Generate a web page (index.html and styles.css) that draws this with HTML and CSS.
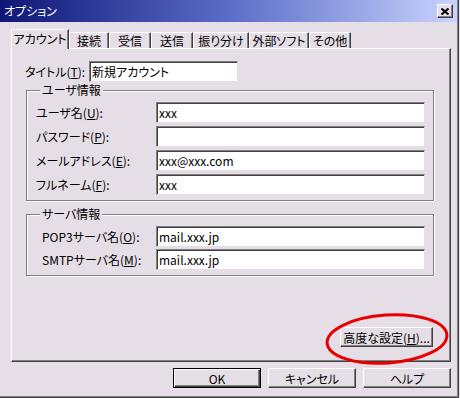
FILE: index.html
```html
<!DOCTYPE html>
<html lang="ja">
<head>
  <meta charset="UTF-8">
  <title>オプション</title>
  <link rel="stylesheet" href="styles.css">
</head>
<body>

  <div class="ventana">
    <div class="barra-titulo">
      <span class="titulo">オプション</span>
      <span class="cerrar">
        <svg width="8" height="7" viewBox="0 0 8 7"><path d="M0.5 0.5L7.5 6.5M7.5 0.5L0.5 6.5" stroke="#000" stroke-width="2"/></svg>
      </span>
    </div>

    <div class="pestanas">
      <div class="pestana activa">アカウント</div>
      <div class="pestana">接続</div>
      <div class="pestana">受信</div>
      <div class="pestana">送信</div>
      <div class="pestana">振り分け</div>
      <div class="pestana">外部ソフト</div>
      <div class="pestana">その他</div>
    </div>

    <div class="panel">
      <div class="fila-titulo">
        <label>タイトル(<u>T</u>):</label>
        <div class="campo campo-titulo">新規アカウント</div>
      </div>

      <fieldset class="grupo usuario">
        <legend>ユーザ情報</legend>
        <div class="fila"><label>ユーザ名(<u>U</u>):</label><div class="campo">xxx</div></div>
        <div class="fila"><label>パスワード(<u>P</u>):</label><div class="campo"></div></div>
        <div class="fila"><label>メールアドレス(<u>E</u>):</label><div class="campo">xxx@xxx.com</div></div>
        <div class="fila"><label>フルネーム(<u>F</u>):</label><div class="campo">xxx</div></div>
      </fieldset>

      <fieldset class="grupo servidor">
        <legend>サーバ情報</legend>
        <div class="fila"><label>POP3サーバ名(<u>O</u>):</label><div class="campo">mail.xxx.jp</div></div>
        <div class="fila"><label>SMTPサーバ名(<u>M</u>):</label><div class="campo">mail.xxx.jp</div></div>
      </fieldset>

      <div class="fila-avanzado">
        <button class="boton avanzado">高度な設定(<u>H</u>)...</button>
      </div>
    </div>

    <div class="botones">
      <button class="boton defecto">OK</button>
      <button class="boton">キャンセル</button>
      <button class="boton">ヘルプ</button>
    </div>

    <svg class="marca" width="140" height="70" viewBox="0 0 140 70">
      <ellipse cx="70" cy="35" rx="60" ry="24" transform="rotate(-4 70 35)" fill="none" stroke="#e80000" stroke-width="3"/>
    </svg>
  </div>

</body>
</html>
```

FILE: styles.css
```css
body {
  margin: 0;
  font-family: "Noto Sans CJK JP", sans-serif;
  font-size: 12px;
  font-feature-settings: "palt";
  color: #000;
  background: #e6dee6;
}

.ventana {
  position: relative;
  width: 459px;
  height: 398px;
  box-sizing: border-box;
  background: #e6dee6;
  border-right: 1px solid #404040;
  border-bottom: 1px solid #404040;
  box-shadow: inset -1px -1px 0 #808080;
  display: flex;
  flex-direction: column;
}

.barra-titulo {
  height: 22px;
  display: flex;
  align-items: center;
  padding: 0 4px 0 4px;
  margin-right: 1px;
  background: linear-gradient(90deg, #0e1676 0%, #5b6cc6 50%, #cad3fe 100%);
  color: #fff;
}

.titulo {
  line-height: 22px;
}

.cerrar {
  margin-left: auto;
  width: 16px;
  height: 14px;
  box-sizing: border-box;
  background: #e6dee6;
  border-top: 1px solid #fff;
  border-left: 1px solid #fff;
  border-right: 1px solid #404040;
  border-bottom: 1px solid #404040;
  box-shadow: inset -1px -1px 0 #808080;
  display: flex;
  align-items: center;
  justify-content: center;
}

.pestanas {
  display: flex;
  align-items: flex-end;
  height: 19px;
  margin-top: 7px;
  padding-left: 11px;
}

.pestana {
  width: 40px;
  height: 16px;
  box-sizing: border-box;
  padding: 0;
  text-align: center;
  white-space: nowrap;
  line-height: 15px;
  border-top: 1px solid #fff;
  border-left: 1px solid #fff;
  border-right: 1px solid #404040;
  box-shadow: inset -1px 0 0 #808080;
}

.pestana:nth-child(3),
.pestana:nth-child(4),
.pestana:nth-child(7) {
  width: 42px;
}

.pestana:nth-child(5) {
  width: 56px;
}

.pestana:nth-child(6) {
  width: 60px;
}

.pestana.activa {
  position: relative;
  z-index: 1;
  width: 58px;
  height: 20px;
  margin-bottom: -1px;
  line-height: 18px;
  background: #e6dee6;
}

.panel {
  width: 440px;
  height: 314px;
  box-sizing: border-box;
  margin-left: 11px;
  padding: 12px 16px 14px 14px;
  border-top: 1px solid #fff;
  border-left: 1px solid #fff;
  border-right: 1px solid #404040;
  border-bottom: 1px solid #404040;
  box-shadow: inset -1px -1px 0 #808080;
  display: flex;
  flex-direction: column;
}

.fila-titulo {
  display: flex;
  align-items: center;
}

.fila-titulo label {
  width: 64px;
  margin-left: -1px;
}

.campo {
  height: 21px;
  box-sizing: border-box;
  background: #fff;
  border-top: 1px solid #808080;
  border-left: 1px solid #808080;
  border-right: 1px solid #e6dee6;
  border-bottom: 1px solid #e6dee6;
  box-shadow: inset 1px 1px 0 #404040;
  padding: 0 2px;
  line-height: 19px;
  white-space: nowrap;
}

.campo-titulo {
  width: 149px;
}

.grupo {
  margin: 1px 0 0 0;
  padding: 5px 8px 5px 9px;
  border: 1px solid #808080;
  box-shadow: inset 1px 1px 0 #fff, 1px 1px 0 #fff;
  display: flex;
  flex-direction: column;
  gap: 3px;
}

.grupo legend {
  padding: 0 2px;
  margin-left: 4px;
  line-height: 14px;
  background: #e6dee6;
}

.servidor {
  margin-top: 6px;
  gap: 2px;
}

.fila {
  display: flex;
  align-items: center;
}

.fila label {
  width: 120px;
}

.servidor .fila label {
  padding-left: 6px;
  width: 114px;
}

.fila .campo {
  width: 269px;
}

.fila-avanzado {
  margin-top: auto;
  display: flex;
  justify-content: flex-end;
  padding-right: 1px;
}

.boton {
  font-family: inherit;
  font-size: 12px;
  font-feature-settings: "palt";
  color: #000;
  height: 20px;
  box-sizing: border-box;
  padding: 0;
  background: #e6dee6;
  border-top: 1px solid #fff;
  border-left: 1px solid #fff;
  border-right: 1px solid #404040;
  border-bottom: 1px solid #404040;
  box-shadow: inset -1px -1px 0 #808080;
}

.avanzado {
  width: 93px;
}

.botones {
  display: flex;
  justify-content: flex-end;
  gap: 7px;
  margin-top: 6px;
  padding-right: 7px;
}

.botones .boton {
  width: 88px;
}

.boton.defecto {
  border: 1px solid #000;
  box-shadow: inset 1px 1px 0 #fff, inset -1px -1px 0 #404040, inset -2px -2px 0 #808080;
}

.marca {
  position: absolute;
  left: 317px;
  top: 304px;
}
```
